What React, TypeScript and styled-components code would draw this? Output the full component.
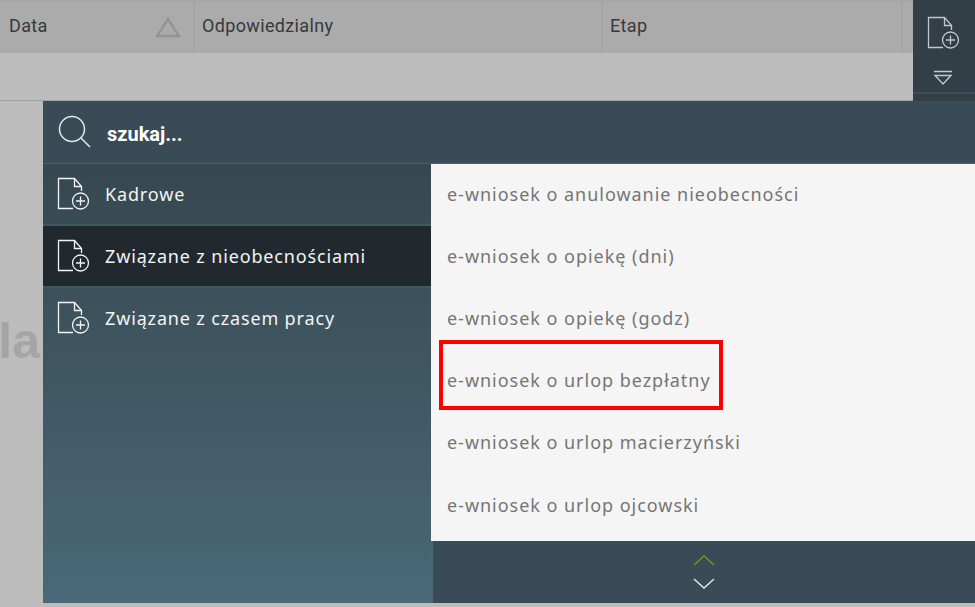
import React from "react";
import styled, { createGlobalStyle } from "styled-components";

const GlobalStyle = createGlobalStyle`
  html, body {
    margin: 0;
    padding: 0;
    background: #bcbcbc;
    overflow: hidden;
  }
`;

const Page = styled.div`
  width: 975px;
  height: 607px;
  display: flex;
  flex-direction: column;
  background: #bcbcbc;
  overflow: hidden;
`;

const TopRow = styled.div`
  height: 101px;
  display: flex;
  flex-shrink: 0;
`;

const TableArea = styled.div`
  flex: 1;
  border-top: 2px solid #a6a6a6;
  border-bottom: 1px solid #a3a3a3;
  box-sizing: border-box;
`;

const HeaderRow = styled.div`
  height: 51px;
  display: flex;
  background: #ababab;
`;

const HeaderCell = styled.div<{ $width: number }>`
  width: ${(p) => p.$width}px;
  flex-shrink: 0;
  box-sizing: border-box;
  padding-left: ${(p) => (p.$width > 200 ? 7 : 9)}px;
  display: flex;
  align-items: center;
  justify-content: space-between;
  border-right: 2px solid #a4a4a4;
  font-family: Roboto, sans-serif;
  font-size: 18px;
  letter-spacing: 0.35px;
  color: #37393b;
  padding-bottom: 4px;
`;

const SortIcon = styled.svg`
  width: 26px;
  height: 22px;
  margin-right: 12px;
  margin-top: 2px;
`;

const ActionColumn = styled.div`
  width: 62px;
  flex-shrink: 0;
  display: flex;
  flex-direction: column;
  align-items: center;
  background: #323f46;
  color: #c4c8ca;
  padding: 16px 2px 0 0;
  box-sizing: border-box;
`;

const DropIcon = styled.svg`
  width: 20px;
  height: 16px;
  margin-top: 20px;
`;

const ColumnRule = styled.div`
  align-self: stretch;
  height: 2px;
  margin: 6px -2px 0 0;
  background: #3b4e5a;
`;

const BodyRow = styled.div`
  flex: 1;
  display: flex;
  min-height: 0;
  padding-bottom: 4px;
`;

const Gutter = styled.div`
  width: 43px;
  flex-shrink: 0;
  overflow: hidden;
  display: flex;
  justify-content: flex-end;
  padding-top: 211px;
  box-sizing: border-box;
`;

const GhostText = styled.div`
  font-family: "Liberation Sans", sans-serif;
  font-weight: 700;
  font-size: 50px;
  line-height: 58px;
  color: #a5a5a5;
  padding-right: 3px;
`;

const Panel = styled.div`
  flex: 1;
  display: flex;
  flex-direction: column;
  background: #374b57;
`;

const SearchBar = styled.div`
  height: 63px;
  flex-shrink: 0;
  display: flex;
  align-items: center;
  box-sizing: border-box;
  padding-left: 15px;
  background: #384b57;
  border-bottom: 1px solid #47616f;
  color: #fff;
`;

const SearchLabel = styled.span`
  margin: 3px 0 0 15px;
  font-family: Roboto, sans-serif;
  font-weight: 700;
  font-size: 20px;
  color: #fff;
`;

const Columns = styled.div`
  flex: 1;
  display: flex;
  min-height: 0;
`;

const Sidebar = styled.div`
  width: 388px;
  flex-shrink: 0;
  display: flex;
  flex-direction: column;
  background: linear-gradient(180deg, #36474f 0%, #4a6878 100%);
`;

const Category = styled.div<{ $active?: boolean }>`
  height: 62px;
  box-sizing: border-box;
  display: flex;
  align-items: center;
  padding-left: 13px;
  gap: 15px;
  border-bottom: 2px solid #3f5663;
  background: ${(p) => (p.$active ? "#21292f" : "transparent")};
  color: #f2f4f5;
  font-family: "Noto Sans", sans-serif;
  font-size: 18px;
  letter-spacing: 0.85px;
`;

const Content = styled.div`
  flex: 1;
  display: flex;
  flex-direction: column;
  min-width: 0;
`;

const List = styled.div`
  height: 377px;
  flex-shrink: 0;
  display: flex;
  flex-direction: column;
  background: #f5f5f5;
`;

const ListItem = styled.div`
  height: 62.2px;
  flex-shrink: 0;
  display: flex;
  align-items: center;
  padding-left: 16px;
  padding-bottom: 3px;
  box-sizing: border-box;
  position: relative;
  font-family: "Noto Sans", sans-serif;
  font-size: 18px;
  letter-spacing: 0.97px;
  color: #757575;
`;

const Highlight = styled.div`
  position: absolute;
  left: 8px;
  top: -11px;
  width: 284px;
  height: 70px;
  box-sizing: border-box;
  border: 4px solid #fe0000;
`;

const Pager = styled.div`
  flex: 1;
  display: flex;
  flex-direction: column;
  align-items: center;
  justify-content: center;
  gap: 12px;
  background: #384b57;
  border-left: 2px solid #4d6673;
  box-sizing: border-box;
`;

const Chevron = styled.svg`
  width: 22px;
  height: 11px;
  display: block;
`;

const FileAddIcon = () => (
  <svg width="34" height="34" viewBox="0 0 34 34" fill="none" stroke="currentColor" strokeWidth="1.3" style={{ flexShrink: 0 }}>
    <path d="M17 31.5H2.5V1.5H18.5L25.5 9.5V14" />
    <path d="M18.5 1.5V9.5H25.5" />
    <circle cx="24.5" cy="24" r="8" />
    <path d="M24.5 19.5V28.5M20 24H29" />
  </svg>
);

const categories = ["Kadrowe", "Związane z nieobecnościami", "Związane z czasem pracy"];

const requests = [
  "e-wniosek o anulowanie nieobecności",
  "e-wniosek o opiekę (dni)",
  "e-wniosek o opiekę (godz)",
  "e-wniosek o urlop bezpłatny",
  "e-wniosek o urlop macierzyński",
  "e-wniosek o urlop ojcowski",
];

const App = () => {
  return (
    <Page>
      <GlobalStyle />
      <TopRow>
        <TableArea>
          <HeaderRow>
            <HeaderCell $width={195}>
              Data
              <SortIcon viewBox="0 0 26 22" fill="none" stroke="#939393" strokeWidth="2.4">
                <path d="M13 3L24 20H2Z" />
              </SortIcon>
            </HeaderCell>
            <HeaderCell $width={408}>Odpowiedzialny</HeaderCell>
            <HeaderCell $width={300}>Etap</HeaderCell>
          </HeaderRow>
        </TableArea>
        <ActionColumn>
          <FileAddIcon />
          <DropIcon viewBox="0 0 20 16" fill="none" stroke="currentColor" strokeWidth="1.4">
            <path d="M1 1.5H19M2 5.5H18L10 14Z" />
          </DropIcon>
          <ColumnRule />
        </ActionColumn>
      </TopRow>
      <BodyRow>
        <Gutter>
          <GhostText>la</GhostText>
        </Gutter>
        <Panel>
          <SearchBar>
            <svg width="34" height="34" viewBox="0 0 34 34" fill="none" stroke="#e4e8ea" strokeWidth="1.5">
              <circle cx="14" cy="14" r="12.5" />
              <path d="M23 23L32 32" />
            </svg>
            <SearchLabel>szukaj...</SearchLabel>
          </SearchBar>
          <Columns>
            <Sidebar>
              {categories.map((name, i) => (
                <Category key={name} $active={i === 1}>
                  <FileAddIcon />
                  {name}
                </Category>
              ))}
            </Sidebar>
            <Content>
              <List>
                {requests.map((name, i) => (
                  <ListItem key={name}>
                    {name}
                    {i === 3 && <Highlight />}
                  </ListItem>
                ))}
              </List>
              <Pager>
                <Chevron viewBox="0 0 22 11" fill="none" stroke="#6f9a18" strokeWidth="1.4">
                  <path d="M1 10L11 1L21 10" />
                </Chevron>
                <Chevron viewBox="0 0 22 11" fill="none" stroke="#e6e8ea" strokeWidth="1.4">
                  <path d="M1 1L11 10L21 1" />
                </Chevron>
              </Pager>
            </Content>
          </Columns>
        </Panel>
      </BodyRow>
    </Page>
  );
};

export default App;
